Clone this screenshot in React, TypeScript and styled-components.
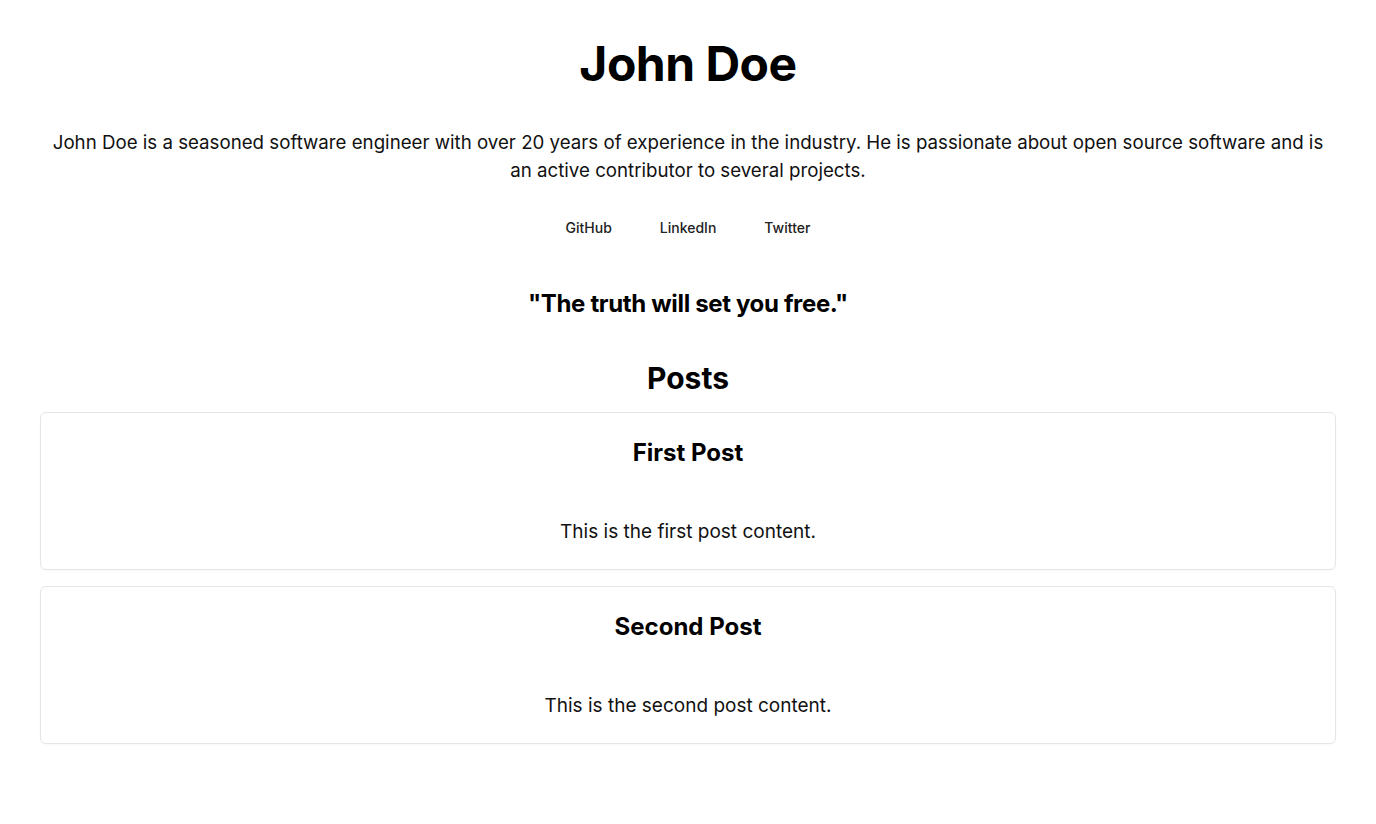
import React from "react";
import styled, { createGlobalStyle } from "styled-components";

const Global = createGlobalStyle`
  html, body { margin: 0; padding: 0; background: #ffffff; }
  body { font-family: Inter, "Noto Sans", sans-serif; color: #0a0a0a; }
  * { box-sizing: border-box; }
`;

const Page = styled.main`
  padding: 34px 40px 40px;
  display: flex;
  flex-direction: column;
  align-items: stretch;
  text-align: center;
`;

const Name = styled.h1`
  margin: 0;
  font-size: 48px;
  line-height: 60px;
  font-weight: 700;
  letter-spacing: -0.5px;
  color: #000;
`;

const Bio = styled.p`
  margin: 35px 0 0;
  font-size: 18.7px;
  line-height: 28px;
  color: #111;
`;

const Links = styled.nav`
  margin-top: 33px;
  display: flex;
  justify-content: center;
  gap: 48px;
`;

const LinkItem = styled.a`
  font-size: 14px;
  line-height: 20px;
  font-weight: 500;
  color: #222;
  text-decoration: none;
`;

const Quote = styled.h2`
  margin: 50px 0 0;
  font-size: 24px;
  line-height: 32px;
  font-weight: 700;
  letter-spacing: -0.35px;
  color: #000;
`;

const SectionTitle = styled.h2`
  margin: 40px 0 0;
  font-size: 30px;
  line-height: 36px;
  font-weight: 700;
  color: #000;
`;

const PostList = styled.div`
  margin-top: 16px;
  display: flex;
  flex-direction: column;
  gap: 16px;
`;

const Card = styled.article`
  border: 1px solid #e5e5e5;
  border-radius: 6px;
  background: #fff;
  padding: 25px 24px 23px;
  display: flex;
  flex-direction: column;
  align-items: center;
  box-shadow: 0 1px 2px rgba(0, 0, 0, 0.03);
`;

const CardTitle = styled.h3`
  margin: 0;
  font-size: 24px;
  line-height: 30px;
  font-weight: 700;
  color: #000;
`;

const CardBody = styled.p`
  margin: 50px 0 0;
  font-size: 19px;
  line-height: 28px;
  color: #111;
`;

const posts = [
  { title: "First Post", body: "This is the first post content." },
  { title: "Second Post", body: "This is the second post content." },
];

export default function App() {
  return (
    <>
      <Global />
      <Page>
        <Name>John Doe</Name>
        <Bio>
          John Doe is a seasoned software engineer with over 20 years of experience in the industry. He is passionate
          about open source software and is an active contributor to several projects.
        </Bio>
        <Links>
          <LinkItem href="#">GitHub</LinkItem>
          <LinkItem href="#">LinkedIn</LinkItem>
          <LinkItem href="#">Twitter</LinkItem>
        </Links>
        <Quote>"The truth will set you free."</Quote>
        <SectionTitle>Posts</SectionTitle>
        <PostList>
          {posts.map((p) => (
            <Card key={p.title}>
              <CardTitle>{p.title}</CardTitle>
              <CardBody>{p.body}</CardBody>
            </Card>
          ))}
        </PostList>
      </Page>
    </>
  );
}
